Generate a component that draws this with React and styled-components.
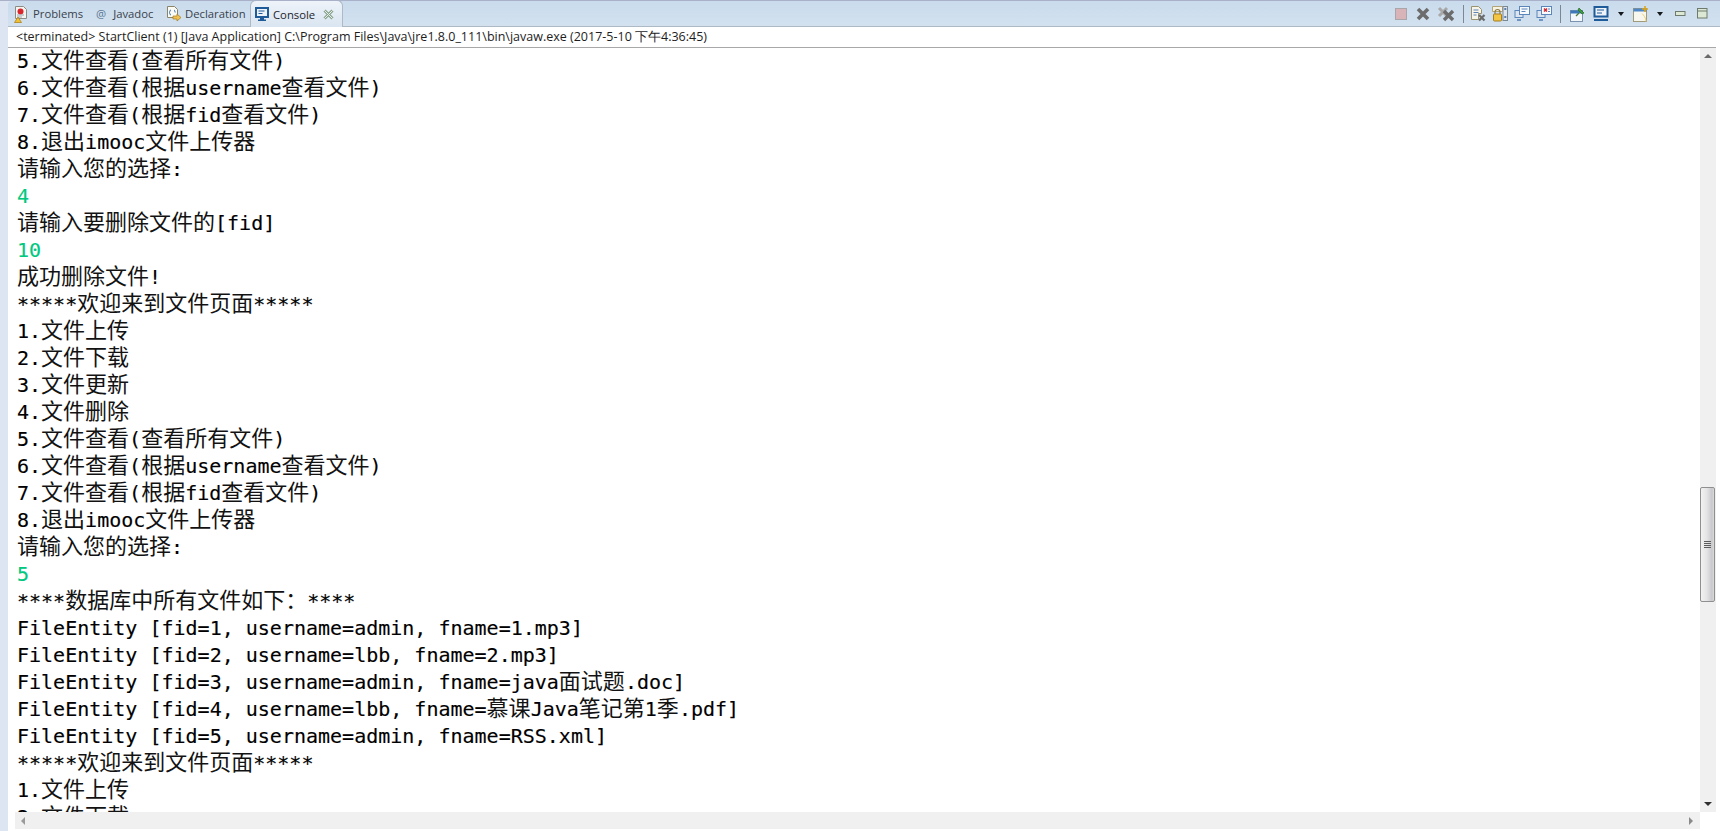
import styled, { createGlobalStyle } from "styled-components";

const GlobalStyle = createGlobalStyle`
html, body {
    margin: 0;
    padding: 0;
    height: 100%;
    background: #ffffff;
    overflow: hidden;
}
`;

const Window = styled.div`
width: 1720px;
height: 831px;
display: flex;
flex-direction: column;
background: #dde5f3;
border-top: 1px solid #a9b1c9;
box-sizing: border-box;
font-family: "Open Sans", "Noto Sans", sans-serif;
overflow: hidden;
`;

const TabBar = styled.div`
height: 25px;
flex: none;
margin-left: 8px;
display: flex;
align-items: stretch;
justify-content: space-between;
background: linear-gradient(#c9dbec, #d3e1ef);
border-bottom: 1px solid #aeb9c6;
border-radius: 4px 0 0 0;
`;

const Tabs = styled.div`
display: flex;
align-items: stretch;
`;

const Tab = styled.div`
width: ${({ $width }) => $width}px;
flex: none;
display: flex;
align-items: center;
gap: ${({ $gap }) => $gap || 5}px;
box-sizing: border-box;
padding-left: ${({ $pad }) => $pad}px;
font-size: 11.3px;
color: #39424c;
white-space: nowrap;
`;

const ActiveTab = styled(Tab)`
background: linear-gradient(#eef3f9, #d9e5f1);
border: 1px solid #aeb9c6;
border-bottom: none;
border-radius: 6px 6px 0 0;
margin-bottom: -1px;
margin-top: -1px;
color: #1d252c;
`;

const AtSign = styled.span`
color: #5b7694;
`;

const CloseSlot = styled.span`
display: flex;
margin-left: 5px;
`;

const Toolbar = styled.div`
display: flex;
align-items: center;
height: 25px;
padding-right: 7px;
`;

const ToolSlot = styled.div`
width: ${({ $width }) => $width || 22}px;
flex: none;
display: flex;
justify-content: center;
align-items: center;
`;

const ToolDivider = styled.div`
width: 1px;
height: 18px;
background: #7d8791;
margin: 0 ${({ $right }) => $right || 6}px 0 5px;
flex: none;
`;

const Drop = styled.div`
width: 0;
height: 0;
margin: 0 6px 0 5px;
border-left: 3.5px solid transparent;
border-right: 3.5px solid transparent;
border-top: 4px solid #14181c;
flex: none;
`;

const Panel = styled.div`
flex: 1;
min-height: 0;
margin-left: 8px;
padding-right: 4px;
background: #ffffff;
display: flex;
flex-direction: column;
`;

const StatusLine = styled.div`
height: 20px;
flex: none;
padding-left: 8px;
font-size: 12.5px;
line-height: 19px;
color: #1d1d1d;
background: #ffffff;
border-bottom: 1px solid #a8a8a8;
white-space: nowrap;
`;

const ConsoleArea = styled.div`
height: 764px;
flex: none;
display: flex;
`;

const Output = styled.div`
flex: 1;
min-width: 0;
padding-left: 9px;
overflow: hidden;
`;

const Line = styled.div`
height: 27px;
line-height: 27px;
font-family: "DejaVu Sans Mono", "Liberation Mono", monospace;
font-size: 20px;
white-space: pre;
color: ${({ $input }) => ($input ? "#00c87f" : "#000000")};
-webkit-text-stroke: 0.15px currentColor;
`;

const Cjk = styled.span`
font-family: "Noto Sans CJK SC", sans-serif;
font-size: 22px;
font-weight: 400;
line-height: 0;
color: #121212;
-webkit-text-stroke: 0;
`;

const VScroll = styled.div`
width: 16px;
flex: none;
background: #f0f0f0;
position: relative;
display: flex;
flex-direction: column;
justify-content: space-between;
align-items: center;
`;

const Thumb = styled.div`
position: absolute;
top: 439px;
left: 0;
width: 15px;
height: 115px;
box-sizing: border-box;
border: 1px solid #8f8f8f;
border-radius: 2px;
background: linear-gradient(90deg, #f2f2f2, #e4e4e6 45%, #c8c8cc 85%, #dcdcdc);
display: flex;
flex-direction: column;
justify-content: center;
align-items: center;
gap: 1px;
`;

const Grip = styled.div`
width: 7px;
height: 1px;
background: #5c5c5c;
`;

const ArrowUp = styled.div`
margin-top: 6px;
width: 0;
height: 0;
border-left: 4px solid transparent;
border-right: 4px solid transparent;
border-bottom: 4px solid #6a6a6a;
`;

const ArrowDown = styled.div`
margin-bottom: 6px;
width: 0;
height: 0;
border-left: 4px solid transparent;
border-right: 4px solid transparent;
border-top: 4px solid #303030;
`;

const HScroll = styled.div`
height: 17px;
flex: none;
margin-left: 7px;
margin-right: 16px;
background: #f0f0f0;
display: flex;
align-items: center;
justify-content: space-between;
padding: 0 7px 0 6px;
`;

const ArrowLeft = styled.div`
width: 0;
height: 0;
border-top: 4px solid transparent;
border-bottom: 4px solid transparent;
border-right: 4px solid #9a9a9a;
`;

const ArrowRight = styled.div`
width: 0;
height: 0;
border-top: 4px solid transparent;
border-bottom: 4px solid transparent;
border-left: 4px solid #8a8a8a;
`;

const LINES = [
    "5.文件查看(查看所有文件)",
    "6.文件查看(根据username查看文件)",
    "7.文件查看(根据fid查看文件)",
    "8.退出imooc文件上传器",
    "请输入您的选择:",
    { input: "4" },
    "请输入要删除文件的[fid]",
    { input: "10" },
    "成功删除文件!",
    "*****欢迎来到文件页面*****",
    "1.文件上传",
    "2.文件下载",
    "3.文件更新",
    "4.文件删除",
    "5.文件查看(查看所有文件)",
    "6.文件查看(根据username查看文件)",
    "7.文件查看(根据fid查看文件)",
    "8.退出imooc文件上传器",
    "请输入您的选择:",
    { input: "5" },
    "****数据库中所有文件如下\uff1a****",
    "FileEntity [fid=1, username=admin, fname=1.mp3]",
    "FileEntity [fid=2, username=lbb, fname=2.mp3]",
    "FileEntity [fid=3, username=admin, fname=java面试题.doc]",
    "FileEntity [fid=4, username=lbb, fname=慕课Java笔记第1季.pdf]",
    "FileEntity [fid=5, username=admin, fname=RSS.xml]",
    "*****欢迎来到文件页面*****",
    "1.文件上传",
    "2.文件下载",
];

function splitCjk(text) {
    return text.split(/([\u3000-\u9fff\uff00-\uffef]+)/).map((part, index) =>
        index % 2 ? <Cjk key={index}>{part}</Cjk> : part
    );
}

function ProblemsIcon() {
    return (
        <svg width="16" height="18" viewBox="0 0 16 18">
            <path d="M2.500 1.500h8l3 3v9h-11z" fill="#f4f4f0" stroke="#8c8c84" />
            <circle cx="7.500" cy="6.500" r="3" fill="#d8262c" />
            <path d="M4 10h7M4 12h5" stroke="#9aa4b0" />
            <path d="M5 12l3.500 5.500h-7z" fill="#f2c230" stroke="#a87a10" strokeWidth=".7" />
        </svg>
    );
}

function DeclarationIcon() {
    return (
        <svg width="16" height="18" viewBox="0 0 16 18">
            <path d="M2.500 1.500h7l3 3v8h-10z" fill="#fbfbf6" stroke="#8a8468" />
            <path d="M6 5c-1.500 0-1 2-1.500 2.500C5 8 4.500 10 6 10" fill="none" stroke="#3a6ea8" />
            <path d="M9 5c1 0 .8 2 1.200 2.500" fill="none" stroke="#3a6ea8" />
            <path d="M8 11h4V9l4 3.500-4 3.500v-2H8z" fill="#f0c050" stroke="#a87c20" strokeWidth=".7" />
        </svg>
    );
}

function ConsoleIcon() {
    return (
        <svg width="16" height="16" viewBox="0 0 16 16">
            <rect x="1" y="1" width="14" height="11" fill="#1f5a99" />
            <rect x="3" y="3" width="10" height="7" fill="#eef3f9" />
            <path d="M4.500 5h6M4.500 7.500h4" stroke="#1f5a99" />
            <path d="M6 12h4v1.500h2V15H4v-1.500h2z" fill="#1f5a99" />
        </svg>
    );
}

function CloseTabIcon() {
    return (
        <svg width="11" height="11" viewBox="0 0 11 11">
            <path d="M1.500 1.500l8 8M9.500 1.500l-8 8" stroke="#8aa58f" strokeWidth="3" />
            <path d="M1.500 1.500l8 8M9.500 1.500l-8 8" stroke="#e6eee6" strokeWidth="1" />
        </svg>
    );
}

function StopIcon() {
    return (
        <svg width="12" height="12" viewBox="0 0 12 12">
            <rect x=".5" y=".5" width="11" height="11" fill="#d8b4b8" stroke="#a9a5a8" />
        </svg>
    );
}

function RemoveIcon() {
    return (
        <svg width="14" height="14" viewBox="0 0 14 14">
            <path d="M2 2l10 10M12 2L2 12" stroke="#6c6c6c" strokeWidth="3.600" />
        </svg>
    );
}

function RemoveAllIcon() {
    return (
        <svg width="18" height="16" viewBox="0 0 18 16">
            <path d="M2 2l8 8M10 2l-8 8" stroke="#a8a8a8" strokeWidth="3" />
            <path d="M7 5l9 9M16 5l-9 9" stroke="#6c6c6c" strokeWidth="3.400" />
        </svg>
    );
}

function ClearIcon() {
    return (
        <svg width="16" height="16" viewBox="0 0 16 16">
            <path d="M1.500 .5h7l3 3v4h-3v6h-7z" fill="#f7f5ea" stroke="#9a9370" />
            <path d="M3.500 4h5M3.500 6.500h5M3.500 9h3" stroke="#5d83b5" />
            <path d="M9 9l5.500 5.500M14.500 9L9 14.500" stroke="#6a6a6a" strokeWidth="2.200" />
        </svg>
    );
}

function ScrollLockIcon() {
    return (
        <svg width="16" height="16" viewBox="0 0 16 16">
            <path d="M.5.5h10v5H.5z" fill="#f6f3e4" stroke="#b2a678" />
            <rect x="11" y=".5" width="4.500" height="14" fill="#dfe6ee" stroke="#7a8794" />
            <path d="M12.300 3h2M12.300 11h2" stroke="#2b5d9a" strokeWidth="1.500" />
            <path d="M3 8V6a2.500 2.500 0 0 1 5 0v2" fill="none" stroke="#8a7a45" strokeWidth="1.200" />
            <rect x="1.500" y="8" width="8" height="7" rx="1" fill="#f2c542" stroke="#a87c20" />
        </svg>
    );
}

function PinOutIcon({ red }) {
    return (
        <svg width="16" height="16" viewBox="0 0 16 16">
            <rect x="1" y="4.500" width="8" height="7" fill="#dde4ee" stroke="#5b86ba" />
            <path d="M3 14h4" stroke="#4f7db5" strokeWidth="1.500" />
            <rect x="5.500" y=".5" width="10" height="8" fill="#f8fafd" stroke="#5b86ba" />
            {red
                ? <path d="M8 2.500l3 3M11 2.500l-3 3" stroke="#d0222a" strokeWidth="1.500" />
                : <path d="M7.500 3h6M7.500 5.500h4" stroke="#5b86ba" />}
            {red && <path d="M12 3h2M12 5.500h2" stroke="#5b86ba" />}
        </svg>
    );
}

function PinIcon() {
    return (
        <svg width="16" height="16" viewBox="0 0 16 16">
            <rect x=".5" y="4.500" width="12" height="11" fill="#f3f6fa" stroke="#7c93ad" />
            <rect x=".5" y="4.500" width="12" height="3" fill="#3d78b8" />
            <path d="M6 10l3-3" stroke="#4c7a3a" strokeWidth="1.200" />
            <path d="M9 2l5 5-2 1-4-4z" fill="#3e9c3c" stroke="#256a28" strokeWidth=".7" />
        </svg>
    );
}

function DisplayIcon() {
    return (
        <svg width="16" height="16" viewBox="0 0 16 16">
            <rect x=".5" y="0" width="15" height="11.500" fill="#1f5a99" />
            <rect x="2.500" y="2" width="11" height="7.500" fill="#eef3f9" />
            <path d="M4 4h7M4 7h5" stroke="#1f5a99" />
            <path d="M1 13h14v2H1z" fill="#1f5a99" />
        </svg>
    );
}

function NewConsoleIcon() {
    return (
        <svg width="16" height="17" viewBox="0 0 16 17">
            <rect x=".5" y="3.500" width="13" height="13" fill="#f7f7ef" stroke="#a09a7a" />
            <rect x=".5" y="3.500" width="13" height="3" fill="#4f86c6" />
            <path d="M13 16.500c0-4-3-7-4-8" fill="none" stroke="#f0d070" />
            <path d="M12 1v6M9 4h6" stroke="#d9a520" strokeWidth="1.600" />
        </svg>
    );
}

function MinimizeIcon() {
    return (
        <svg width="11" height="6" viewBox="0 0 11 6">
            <rect x=".5" y=".5" width="9.500" height="4" fill="#dce8d4" stroke="#6f7a6f" />
        </svg>
    );
}

function MaximizeIcon() {
    return (
        <svg width="11" height="11" viewBox="0 0 11 11">
            <rect x=".5" y=".5" width="9.500" height="9.500" fill="#dce8d4" stroke="#6f7a6f" />
            <path d="M1 3h9" stroke="#6f7a6f" />
        </svg>
    );
}

export default function App() {
    return (
        <Window>
            <GlobalStyle />
            <TabBar>
                <Tabs>
                    <Tab $width={85} $pad={5} $gap={4}><ProblemsIcon />Problems</Tab>
                    <Tab $width={71} $gap={7} $pad={3}><AtSign>@</AtSign>Javadoc</Tab>
                    <Tab $width={86} $gap={4} $pad={1}><DeclarationIcon />Declaration</Tab>
                    <ActiveTab $width={93} $pad={3} $gap={3}>
                        <ConsoleIcon />Console
                        <CloseSlot><CloseTabIcon /></CloseSlot>
                    </ActiveTab>
                </Tabs>
                <Toolbar>
                    <ToolSlot><StopIcon /></ToolSlot>
                    <ToolSlot><RemoveIcon /></ToolSlot>
                    <ToolSlot $width={24}><RemoveAllIcon /></ToolSlot>
                    <ToolDivider $right={3} />
                    <ToolSlot><ClearIcon /></ToolSlot>
                    <ToolSlot><ScrollLockIcon /></ToolSlot>
                    <ToolSlot><PinOutIcon /></ToolSlot>
                    <ToolSlot><PinOutIcon red /></ToolSlot>
                    <ToolDivider />
                    <ToolSlot><PinIcon /></ToolSlot>
                    <ToolSlot $width={24}><DisplayIcon /></ToolSlot>
                    <Drop />
                    <ToolSlot><NewConsoleIcon /></ToolSlot>
                    <Drop />
                    <ToolSlot><MinimizeIcon /></ToolSlot>
                    <ToolSlot><MaximizeIcon /></ToolSlot>
                </Toolbar>
            </TabBar>
            <Panel>
                <StatusLine>
                    {"<terminated> StartClient (1) [Java Application] C:\\Program Files\\Java\\jre1.8.0_111\\bin\\javaw.exe (2017-5-10 下午4:36:45)"}
                </StatusLine>
                <ConsoleArea>
                    <Output>
                        {LINES.map((line, index) =>
                            typeof line === "string"
                                ? <Line key={index}>{splitCjk(line)}</Line>
                                : <Line key={index} $input>{line.input}</Line>
                        )}
                    </Output>
                    <VScroll>
                        <ArrowUp />
                        <Thumb>
                            <Grip /><Grip /><Grip /><Grip />
                        </Thumb>
                        <ArrowDown />
                    </VScroll>
                </ConsoleArea>
                <HScroll>
                    <ArrowLeft />
                    <ArrowRight />
                </HScroll>
            </Panel>
        </Window>
    );
}
